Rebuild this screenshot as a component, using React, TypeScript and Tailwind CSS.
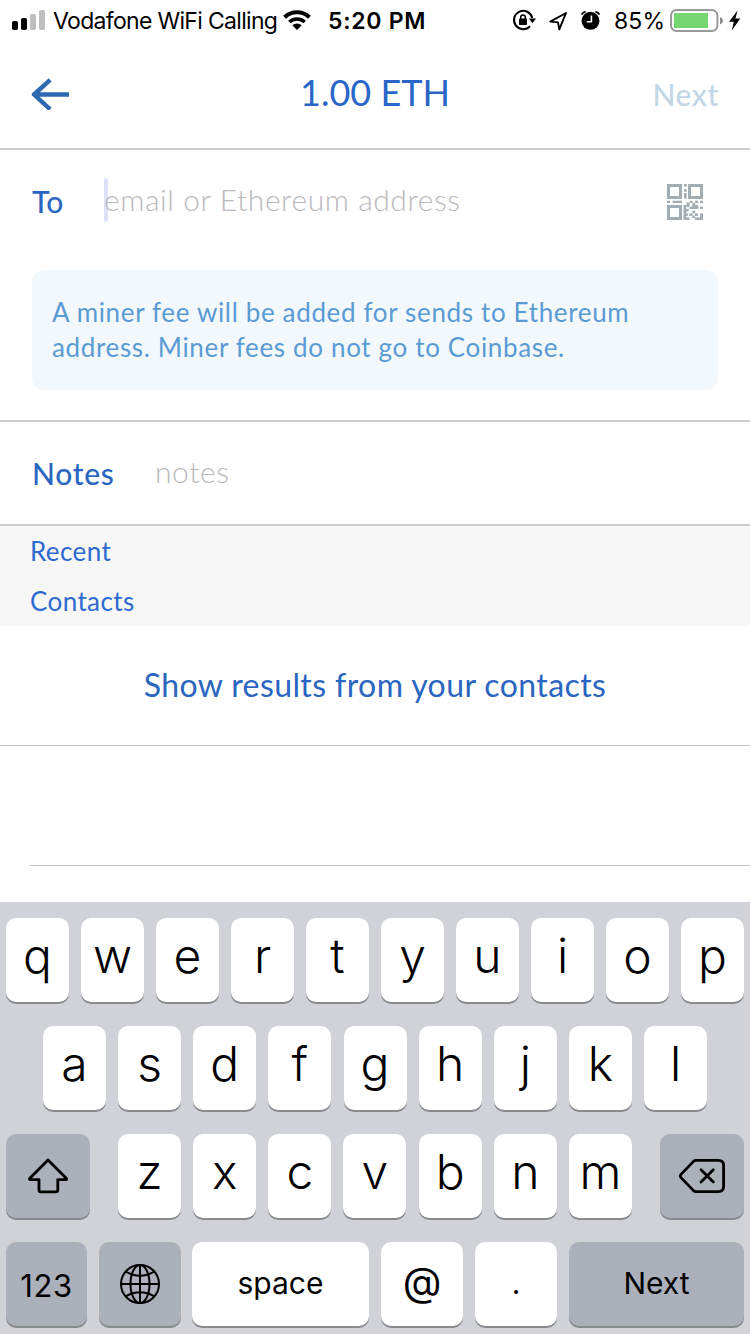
import React from "react";

function StatusBar() {
  return (
    <div className="flex h-10 items-start font-[Inter,sans-serif] text-[23px] leading-[42px] text-black">
      <svg className="ml-3 mt-2.5 h-5 w-[33px] shrink-0" viewBox="0 0 33 20">
        <rect x="0" y="11" width="6" height="9" rx="1.8" />
        <rect x="9" y="8" width="6" height="12" rx="1.8" />
        <rect x="18" y="4" width="6" height="16" rx="1.8" fill="#bfbfbf" />
        <rect x="27" y="0" width="6" height="20" rx="1.8" fill="#bfbfbf" />
      </svg>
      <span className="ml-2 w-[226px] shrink-0 whitespace-nowrap tracking-[-0.68px]">Vodafone WiFi Calling</span>
      <svg className="ml-1 mt-[9px] h-[22px] w-7 shrink-0" viewBox="0 0 28 22">
        <path d="M1.6 8.2A18 18 0 0 1 26.4 8.2" fill="none" stroke="#000" strokeWidth="4" />
        <path d="M6.3 13A11.4 11.4 0 0 1 21.7 13" fill="none" stroke="#000" strokeWidth="3.6" />
        <path d="M9.3 16.3A7 7 0 0 1 18.7 16.3L14 21Z" />
      </svg>
      <span className="ml-[17px] w-[102px] shrink-0 whitespace-nowrap font-semibold tracking-[0.73px]">5:20 PM</span>
      <svg className="ml-[82px] mt-2 h-6 w-6 shrink-0" viewBox="512 8 24 24">
        <path d="M532.2 18A9.2 9.2 0 1 0 530 26.2" fill="none" stroke="#000" strokeWidth="2" />
        <path d="M528.8 18.6H536L532.4 23.2Z" />
        <rect x="519" y="18.5" width="8" height="6.5" rx="0.8" />
        <path d="M520.7 19V17.2A2.3 2.3 0 0 1 525.3 17.2V19" fill="none" stroke="#000" strokeWidth="1.5" />
      </svg>
      <svg className="ml-3 mt-2 h-6 w-5 shrink-0" viewBox="548 8 20 24">
        <path d="M566 13L550.3 21.6L558 22.4L559.3 29.4Z" fill="none" stroke="#000" strokeWidth="1.9" strokeLinejoin="round" />
      </svg>
      <svg className="ml-3 mt-2 h-6 w-[22px] shrink-0" viewBox="580 8 22 24">
        <circle cx="590.5" cy="20.8" r="9" />
        <path d="M581.5 14.6Q582.7 12.2 585.6 11.6M599.5 14.6Q598.3 12.2 595.4 11.6" fill="none" stroke="#000" strokeWidth="1.8" />
        <path d="M591.4 15.4V21.7H586.8" fill="none" stroke="#fff" strokeWidth="1.6" />
      </svg>
      <span className="ml-3 w-14 shrink-0 tracking-[0.1px]">85%</span>
      <svg className="mt-2 h-6 w-[72px] shrink-0" viewBox="670 8 72 24">
        <rect x="671" y="10" width="46.4" height="21" rx="5.5" fill="#fff" stroke="#999" strokeWidth="2" />
        <rect x="674" y="13" width="34" height="15" fill="#76d672" />
        <path d="M720 17Q723 18.5 723 20.7Q723 23 720 24.5Z" fill="#8c8c8c" />
        <path d="M737.6 10.5L729 21.7H733.8L731.8 30.5L740.3 18.6H735.4Z" />
      </svg>
    </div>
  );
}

function Header() {
  return (
    <header className="grid h-[110px] grid-cols-[1fr_auto_1fr] items-start border-b-2 border-[#ccc] pl-[31px] pr-[31px]">
      <svg className="mt-[38px] h-8 w-[39px]" viewBox="31 78 39 32" fill="none" stroke="#2e69b2" strokeWidth="4.4">
        <path d="M69 94.5H34M50.2 79.8L34 94.5L50.2 109.4" strokeLinejoin="round" />
      </svg>
      <h1 className="mt-[30px] text-[36px] leading-[44px] text-[#2a66c8]">1.00 ETH</h1>
      <span className="mt-[36px] justify-self-end text-[30px] font-medium leading-9 tracking-[0.6px] text-[#c1d7e6]">Next</span>
    </header>
  );
}

const QR_BITS: number[][] = [
  [17, 0, 2.7, 2.7], [17, 5, 2.7, 2.7], [17, 9, 2.7, 5.7],
  [0, 16.7, 3, 2.3], [5.7, 16.7, 9.3, 2.3],
  [16.5, 21, 2.8, 15], [19.5, 18.4, 3.2, 2.8], [23, 16.7, 2.6, 2.3], [28, 16.7, 3.2, 2.3], [33, 16.7, 3, 2.3],
  [25.4, 19, 2.8, 2], [19.5, 21, 2.8, 2], [25.4, 21, 5.8, 2], [22.5, 22.6, 8.8, 2.4], [33, 22.6, 3, 2.4],
  [19, 25, 2.8, 2.4], [25.4, 26.7, 2.8, 2.6], [22.4, 29.4, 3, 2.6], [28, 29.4, 3, 2.6], [33, 29.4, 3, 6.6],
  [19, 29.4, 1.8, 2.6], [25.4, 31.6, 2.6, 2.4], [19, 33.4, 3.4, 2.6], [28, 33.4, 8, 2.6],
];

function QrIcon() {
  return (
    <svg className="mt-[34px] h-9 w-9 shrink-0" viewBox="0 0 36 36" fill="#a2acb5">
      {[[0, 0], [21, 0], [0, 21]].map(([x, y]) => (
        <rect key={`${x}-${y}`} x={x + 1.5} y={y + 1.5} width="12" height="12" fill="none" stroke="#a2acb5" strokeWidth="3" />
      ))}
      {QR_BITS.map(([x, y, w, h], i) => (
        <rect key={i} x={x} y={y} width={w} height={h} />
      ))}
    </svg>
  );
}

function Recipient() {
  return (
    <section className="h-[272px] border-b-2 border-[#ccc] px-8">
      <div className="flex h-[120px] items-start text-[30px] leading-9">
        <span className="mt-[33px] w-[72px] shrink-0 font-medium text-[#2a66c0]">To</span>
        <div className="relative mt-7 h-11 grow">
          <div className="absolute left-0 top-0 h-11 w-1 rounded-sm bg-[#dde2fa]" />
          <span className="relative block pt-[3px] font-light tracking-[0.57px] text-[#b9b9bd]">email or Ethereum address</span>
        </div>
        <div className="mr-[15px]">
          <QrIcon />
        </div>
      </div>
      <div className="h-[120px] whitespace-nowrap rounded-xl bg-[#f2f8fc] pl-5 pt-[25px] text-[26px] leading-[35px] text-[#5a9bd4]">
        <p className="tracking-[0.65px]">A miner fee will be added for sends to Ethereum</p>
        <p className="tracking-[0.65px]">address. Miner fees do not go to Coinbase.</p>
      </div>
    </section>
  );
}

function Key({ label }: { label: string }) {
  return (
    <div className="flex h-[84px] w-[63px] shrink-0 items-center justify-center rounded-[10px] bg-white pb-[9px] text-[48px] font-[350] shadow-[0_2px_0_#898a8d]">
      {label}
    </div>
  );
}

function WideKey({ className, children }: { className: string; children: React.ReactNode }) {
  return (
    <div className={`flex h-[84px] shrink-0 items-center justify-center rounded-[10px] text-[30px] shadow-[0_2px_0_#898a8d] ${className}`}>
      {children}
    </div>
  );
}

function Keyboard() {
  return (
    <div className="flex h-[432px] flex-col gap-6 bg-[#d1d2d8] px-1.5 pt-4 font-[Inter,sans-serif] leading-none text-black">
      <div className="flex justify-between">
        {"qwertyuiop".split("").map((k) => <Key key={k} label={k} />)}
      </div>
      <div className="flex justify-between px-[37px]">
        {"asdfghjkl".split("").map((k) => <Key key={k} label={k} />)}
      </div>
      <div className="flex justify-between">
        <WideKey className="w-[84px] bg-[#abb0ba]">
          <svg className="h-[84px] w-[84px]" viewBox="6 1134 84 84" fill="none" stroke="#000" strokeWidth="2.8" strokeLinejoin="round">
            <path d="M48 1160L66.5 1178.4Q67 1179.6 65.6 1179.6H57.8V1190Q57.8 1191.8 56 1191.8H40.8Q39 1191.8 39 1190V1179.6H30.6Q29 1179.6 29.6 1178.4Z" />
          </svg>
        </WideKey>
        <div className="flex w-[514px] justify-between">
          {"zxcvbnm".split("").map((k) => <Key key={k} label={k} />)}
        </div>
        <WideKey className="w-[84px] bg-[#abb0ba]">
          <svg className="h-[84px] w-[84px]" viewBox="660 1134 84 84" fill="none" stroke="#000" strokeWidth="2.8" strokeLinejoin="round" strokeLinecap="round">
            <path d="M696 1160.4H718.5Q723.6 1160.4 723.6 1165.5V1186.5Q723.6 1191.6 718.5 1191.6H696Q694.6 1191.6 693.5 1190.6L681 1177.6Q679.5 1176 681 1174.4L693.5 1161.4Q694.6 1160.4 696 1160.4Z" />
            <path d="M701 1169.7L713.3 1182M713.3 1169.7L701 1182" />
          </svg>
        </WideKey>
      </div>
      <div className="flex">
        <WideKey className="w-[81px] bg-[#abb0ba] pt-0.5 tracking-[0.6px]"><span className="text-[31px]">123</span></WideKey>
        <WideKey className="ml-3 w-[82px] bg-[#abb0ba]">
          <svg className="h-11 w-11" viewBox="-22 -22 44 44" fill="none" stroke="#000" strokeWidth="2">
            <circle r="19" />
            <ellipse rx="9.5" ry="19" />
            <path d="M0 -19V19M-19 0H19M-14.3 -12.3Q0 -4.2 14.3 -12.3M-14.3 12.3Q0 4.2 14.3 12.3" />
          </svg>
        </WideKey>
        <WideKey className="ml-[11px] w-[177px] bg-white pb-0.5">space</WideKey>
        <WideKey className="ml-3 w-[82px] bg-white pb-1"><span className="text-[40px]">@</span></WideKey>
        <WideKey className="ml-3 w-[82px] bg-white pb-0.5">.</WideKey>
        <WideKey className="ml-3 w-[175px] bg-[#abb0ba] pb-0.5">Next</WideKey>
      </div>
    </div>
  );
}

export default function App() {
  return (
    <div className="flex h-[1334px] w-[750px] flex-col overflow-hidden bg-white font-[Lato,sans-serif]">
      <StatusBar />
      <Header />
      <Recipient />
      <section className="flex h-[104px] items-start border-b-2 border-[#ccc] pl-8 text-[30px] leading-9">
        <span className="mt-[33px] w-[123px] font-medium tracking-[0.7px] text-[#2a66c0]">Notes</span>
        <span className="mt-[31px] font-light tracking-[0.6px] text-[#b9b9bd]">notes</span>
      </section>
      <section className="h-[100px] bg-[#f7f7f7] pl-[30px] text-[26px] leading-[50px] tracking-[0.4px] text-[#2d6ad0]">
        <p>Recent</p>
        <p>Contacts</p>
      </section>
      <button className="h-[120px] border-b border-[#c8c7cc] pb-0.5 text-[32px] tracking-[0.4px] text-[#2a66c0]">
        Show results from your contacts
      </button>
      <div className="ml-[30px] h-[120px] border-b border-[#c8c7cc]" />
      <div className="h-9" />
      <Keyboard />
    </div>
  );
}
